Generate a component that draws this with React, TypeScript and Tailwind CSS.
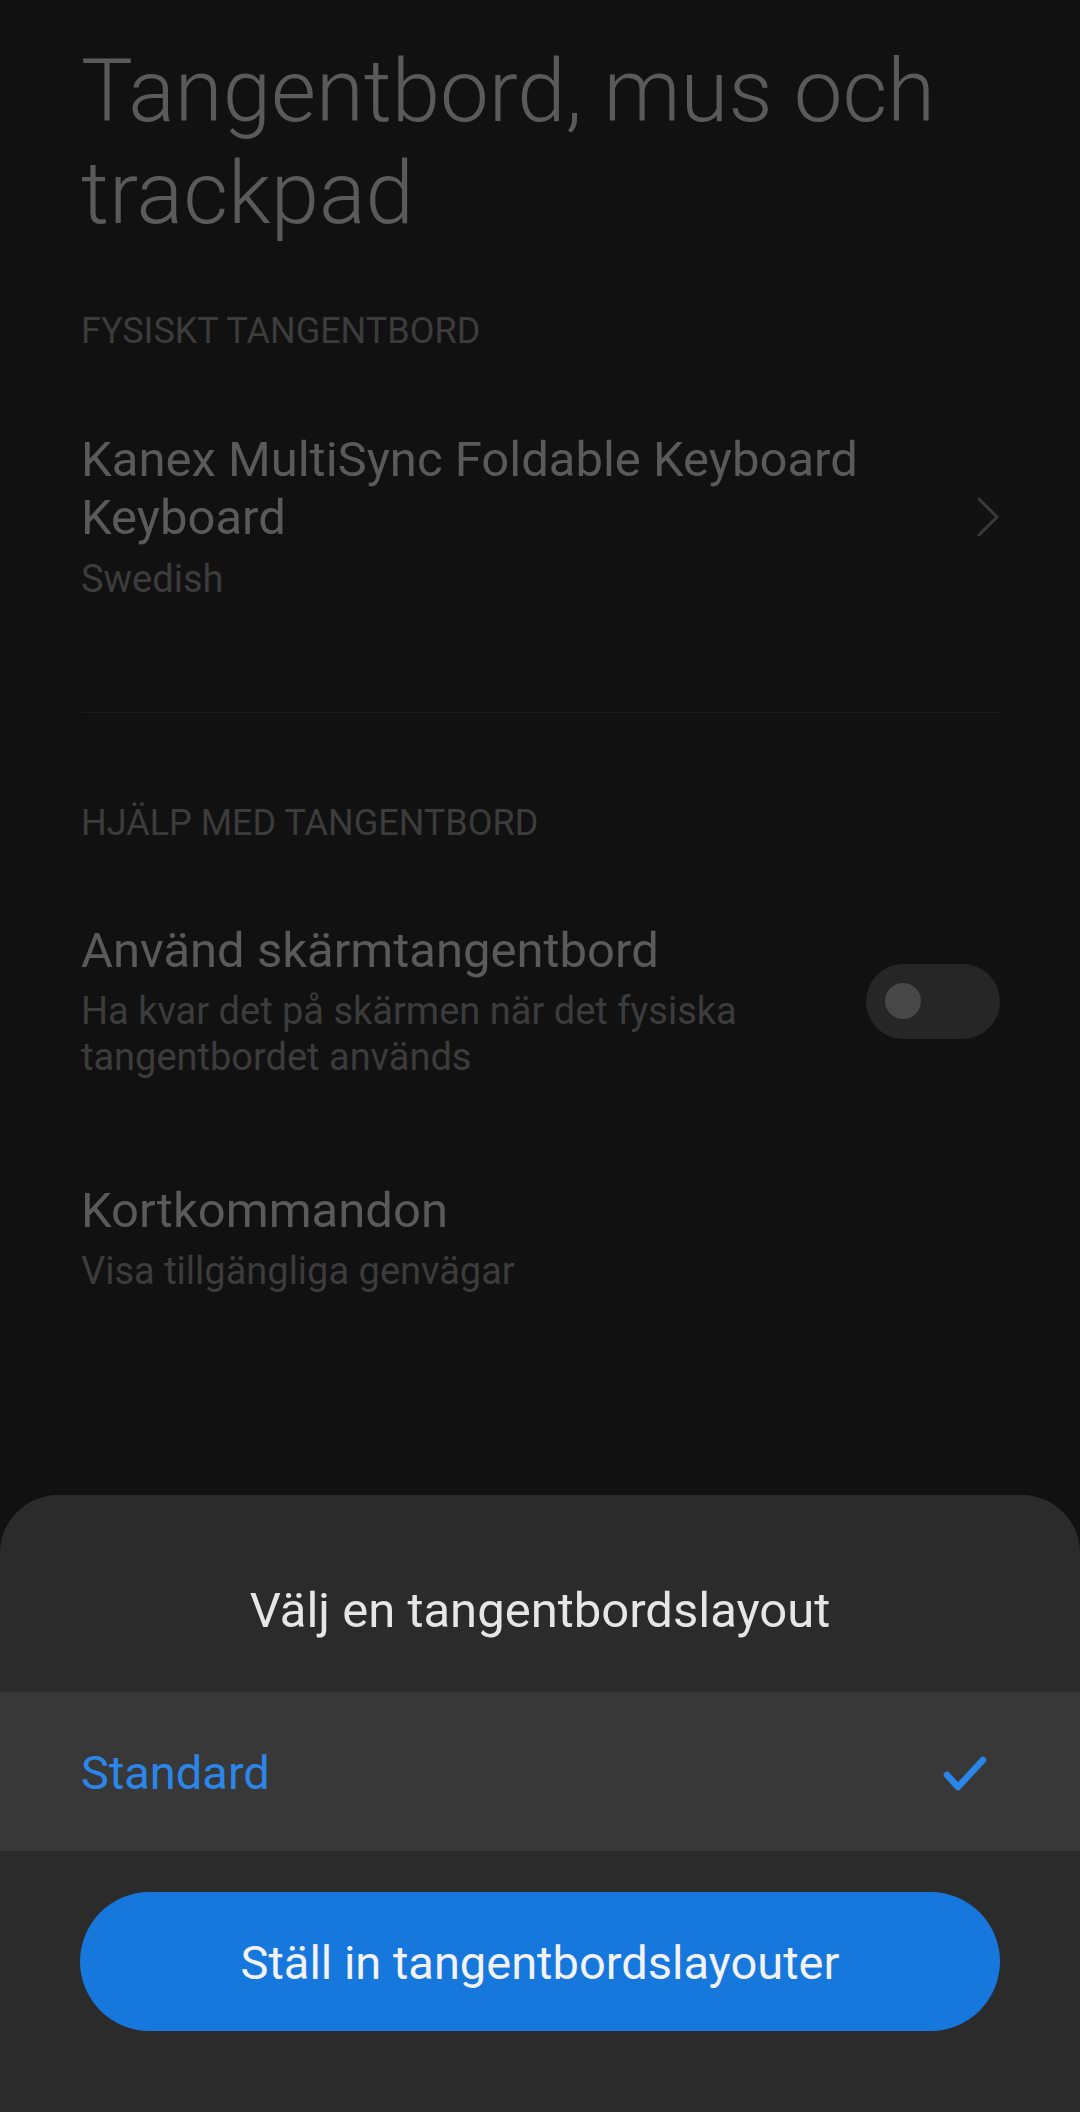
// Dimmed settings page behind a bottom sheet

function Chevron() {
  return (
    <svg width="24" height="40" viewBox="0 0 24 40" fill="none" className="shrink-0">
      <path d="M3 2 L21 20 L3 38" stroke="#393939" strokeWidth="3" strokeLinecap="round" strokeLinejoin="round" />
    </svg>
  )
}

function CheckMark() {
  return (
    <svg width="46" height="38" viewBox="0 0 46 38" fill="none" className="shrink-0">
      <path d="M5 20 L16 32 L41 5" stroke="#2a86e8" strokeWidth="6.5" strokeLinecap="round" strokeLinejoin="round" />
    </svg>
  )
}

function Toggle() {
  return (
    <div className="flex h-[75px] w-[134px] shrink-0 items-center rounded-full bg-[#262626] pl-[19px]">
      <div className="h-[36px] w-[36px] rounded-full bg-[#474747]" />
    </div>
  )
}

export default function App() {
  return (
    <div className="flex h-[2112px] w-[1080px] flex-col bg-[#111111] font-['Roboto','Noto_Sans',sans-serif]">
      {/* ── Settings page (dimmed) ── */}
      <div className="flex flex-col pl-[81px] pr-[80px] pt-[40px]">
        <h1 className="font-['Roboto_Light','Roboto',sans-serif] text-[87px] font-light leading-[102px] text-[#5a5a5a]">
          Tangentbord, mus och trackpad
        </h1>

        <div className="mt-[67px] text-[36px] leading-[40px] text-[#3c3c3c]">FYSISKT TANGENTBORD</div>

        <div className="mt-[80px] flex items-center gap-6">
          <div className="flex-1">
            <div className="text-[49px] leading-[58px] text-[#5a5a5a]">
              Kanex MultiSync Foldable Keyboard Keyboard
            </div>
            <div className="mt-[9px] text-[38px] leading-[46px] text-[#3c3c3c]">Swedish</div>
          </div>
          <Chevron />
        </div>

        <div className="mt-[110px] h-px bg-[#1c1c1c]" />

        <div className="mt-[90px] text-[36px] leading-[40px] text-[#3c3c3c]">HJÄLP MED TANGENTBORD</div>

        <div className="mt-[79px] flex items-center gap-10">
          <div className="flex-1">
            <div className="text-[49px] leading-[58px] text-[#5a5a5a]">Använd skärmtangentbord</div>
            <div className="mt-[8px] text-[38px] leading-[46px] text-[#3c3c3c]">
              Ha kvar det på skärmen när det fysiska tangentbordet används
            </div>
          </div>
          <Toggle />
        </div>

        <div className="mt-[102px]">
          <div className="text-[49px] leading-[58px] text-[#5a5a5a]">Kortkommandon</div>
          <div className="mt-[8px] text-[38px] leading-[46px] text-[#3c3c3c]">Visa tillgängliga genvägar</div>
        </div>
      </div>

      {/* ── Bottom sheet ── */}
      <div className="mt-auto flex h-[617px] flex-col rounded-t-[58px] bg-[#2b2b2b] pt-[88px]">
        <div className="text-center text-[49px] leading-[56px] text-[#e6e6e6]">Välj en tangentbordslayout</div>

        <div className="mt-[53px] flex h-[159px] items-center justify-between bg-[#383838] pl-[81px] pr-[92px] pt-[4px]">
          <span className="text-[47px] text-[#2a86e8]">Standard</span>
          <CheckMark />
        </div>

        <div className="px-[80px] pt-[41px]">
          <button className="flex h-[139px] w-full items-center justify-center rounded-full bg-[#1677dd] pt-[4px] text-[47px] text-[#f2f2f2]">
            Ställ in tangentbordslayouter
          </button>
        </div>
      </div>
    </div>
  )
}
